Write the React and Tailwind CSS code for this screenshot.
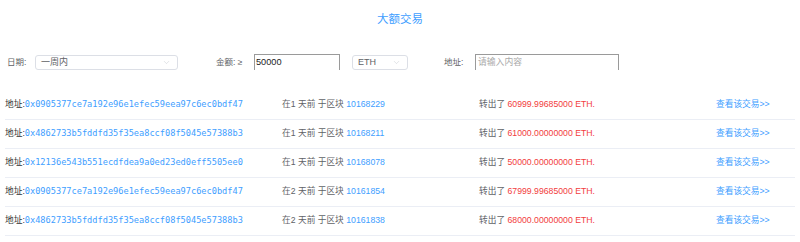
import { ChevronDown } from 'lucide-react'

const rows = [
  { addr: '0x0905377ce7a192e96e1efec59eea97c6ec0bdf47', days: 1, block: '10168229', amount: '60999.99685000' },
  { addr: '0x4862733b5fddfd35f35ea8ccf08f5045e57388b3', days: 1, block: '10168211', amount: '61000.00000000' },
  { addr: '0x12136e543b551ecdfdea9a0ed23ed0eff5505ee0', days: 1, block: '10168078', amount: '50000.00000000' },
  { addr: '0x0905377ce7a192e96e1efec59eea97c6ec0bdf47', days: 2, block: '10161854', amount: '67999.99685000' },
  { addr: '0x4862733b5fddfd35f35ea8ccf08f5045e57388b3', days: 2, block: '10161838', amount: '68000.00000000' }
]

function Select({ value, width }) {
  return (
    <div className={`${width} h-[15px] mt-[1px] flex items-center justify-between border border-[#dcdfe6] rounded-[3px] pl-[5px] pr-[6px] text-[9px] text-[#606266]`}>
      <span>{value}</span>
      <ChevronDown size={9} strokeWidth={1.2} className="text-[#c0c4cc]" />
    </div>
  )
}

function App() {
  return (
    <div className="w-[800px] h-[242px] bg-white overflow-hidden font-['Liberation_Sans','Noto_Sans_CJK_SC',sans-serif]">
      <h1 className="pt-[12px] text-center text-[11.5px] leading-[14px] text-[#409eff]">大额交易</h1>

      <div className="mt-[28px] flex items-start h-[16px] text-[8.5px] text-[#606266]">
        <span className="ml-[7px] w-[28px] leading-[16px]">日期:</span>
        <Select value="一周内" width="w-[143px]" />
        <span className="ml-[38px] w-[38px] leading-[16px]">金额: ≥</span>
        <div className="w-[86px] h-[16px] border-t-[1.5px] border-x-[1.5px] border-[#9a9a9a] pl-[1px] text-[9.2px] leading-[14px] text-[#222]">
          50000
        </div>
        <div className="ml-[12px]">
          <Select value="ETH" width="w-[56px]" />
        </div>
        <span className="ml-[36px] w-[31px] leading-[16px]">地址:</span>
        <div className="w-[144px] h-[16px] border-t-[1.5px] border-x-[1.5px] border-[#9a9a9a] pl-[2px] text-[8.8px] leading-[14px] text-[#aaa]">
          请输入内容
        </div>
      </div>

      <div className="mt-[21px] mx-[5px]">
        {rows.map((r, i) => (
          <div
            key={i}
            className="grid grid-cols-[277px_197px_237px_1fr] pt-[7px] pb-[9px] leading-[12px] border-b border-[#ebeef5] text-[8.7px] text-[#606266] whitespace-nowrap"
          >
            <div className="text-[#303133]">
              地址:<span className="font-['DejaVu_Sans_Mono',monospace] text-[8.65px] text-[#409eff]">{r.addr}</span>
            </div>
            <div>
              在{r.days} 天前 于区块 <span className="text-[#409eff]">{r.block}</span>
            </div>
            <div>
              转出了 <span className="text-[#f23c3c]">{r.amount} ETH.</span>
            </div>
            <div className="text-[#409eff]">查看该交易&gt;&gt;</div>
          </div>
        ))}
      </div>
    </div>
  )
}

export default App
